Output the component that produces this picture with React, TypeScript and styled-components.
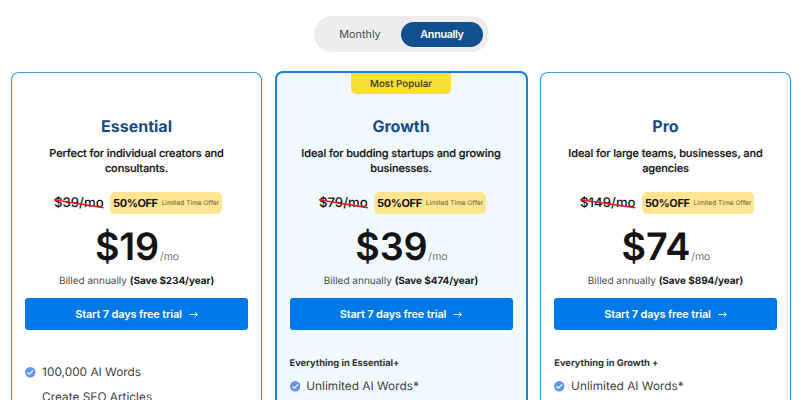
import React from "react";
import styled, { createGlobalStyle } from "styled-components";

const GlobalStyle = createGlobalStyle`
  *, *::before, *::after { box-sizing: border-box; }
  html, body { margin: 0; height: 400px; overflow: hidden; background: #fff; }
  body {
    font-family: Inter, "Liberation Sans", sans-serif;
    color: #141414;
    text-rendering: geometricPrecision;
  }
`;

const Page = styled.main`
  height: 400px;
  overflow: hidden;
  padding: 16px 9px 0 11px;
`;

const Toggle = styled.div`
  display: flex;
  align-items: center;
  width: 175px;
  height: 36px;
  margin: 0 0 19px 303px;
  padding: 0 6px 0 5px;
  border-radius: 18px;
  background: #ededed;
`;

const ToggleOption = styled.button<{ $active?: boolean }>`
  flex: 1;
  height: 25px;
  padding: 0;
  border: 0;
  border-radius: 13px;
  background: ${(p) => (p.$active ? "#11508f" : "transparent")};
  color: ${(p) => (p.$active ? "#fff" : "#484848")};
  font: ${(p) => (p.$active ? 600 : 400)} 10.8px/25px Inter, sans-serif;
  letter-spacing: ${(p) => (p.$active ? "-0.34px" : "0")};
`;

const Plans = styled.div`
  display: grid;
  grid-template-columns: 251px 253px 251px;
  column-gap: 12.5px;
`;

const Card = styled.section<{ $featured?: boolean }>`
  display: flex;
  flex-direction: column;
  height: 340px;
  margin-top: ${(p) => (p.$featured ? "0" : "1px")};
  padding: ${(p) => (p.$featured ? "0 13px" : "1px 13.3px 0")};
  border: ${(p) => (p.$featured ? "2px solid #1a7fe0" : "1px solid #3c97e6")};
  border-bottom: 0;
  border-radius: 8px 8px 0 0;
  background: ${(p) => (p.$featured ? "#f0f9fe" : "#fff")};
`;

const BadgeSlot = styled.div<{ $short?: boolean }>`
  display: flex;
  justify-content: center;
  height: ${(p) => (p.$short ? "42px" : "43px")};
`;

const Badge = styled.span`
  width: 100px;
  height: 21px;
  border-radius: 0 0 5px 5px;
  background: #f9de38;
  color: #3a3210;
  font-size: 9.8px;
  font-weight: 500;
  line-height: 23px;
  text-align: center;
`;

const PlanName = styled.h2`
  margin: 0;
  color: #144b87;
  font-size: 16px;
  font-weight: 700;
  line-height: 20px;
  text-align: center;
`;

const Description = styled.p`
  height: 30px;
  margin: 10px 0 0;
  font-size: 11px;
  font-weight: 500;
  line-height: 15px;
  letter-spacing: -0.12px;
  text-align: center;
  white-space: pre-line;
  -webkit-text-stroke: 0.2px currentColor;
`;

const OfferRow = styled.div`
  display: flex;
  justify-content: center;
  align-items: center;
  gap: 6.5px;
  height: 22px;
  margin-top: 16px;
  padding-left: 3.2px;
`;

const OldPrice = styled.span`
  position: relative;
  font-size: 13.2px;
  font-weight: 500;
  line-height: 20px;
`;

const Strike = styled.svg`
  position: absolute;
  left: 0;
  top: 5px;
  width: 100%;
  height: 12px;
`;

const Offer = styled.span`
  display: flex;
  justify-content: center;
  align-items: center;
  gap: 4px;
  width: 112px;
  height: 22px;
  border-radius: 5px;
  background: #ffe590;
  white-space: nowrap;
`;

const Discount = styled.b`
  font-size: 11px;
  font-weight: 700;
  letter-spacing: -0.4px;
`;

const OfferNote = styled.span`
  color: #665a38;
  font-size: 6.6px;
`;

const PriceRow = styled.div`
  display: flex;
  justify-content: center;
  align-items: baseline;
  gap: 1px;
  height: 46px;
  margin-top: 10px;
  padding-left: 1px;
  line-height: 46px;
`;

const Price = styled.strong`
  font-size: 37.7px;
  font-weight: 600;
  letter-spacing: -0.2px;
`;

const Period = styled.span`
  color: #747474;
  font-size: 10.5px;
`;

const Billing = styled.p`
  margin: 4px 0 0;
  color: #4c4c4c;
  font-size: 10px;
  line-height: 14px;
  text-align: center;
  white-space: nowrap;

  b { color: #202020; font-weight: 700; letter-spacing: -0.08px; }
`;

const TrialButton = styled.button`
  display: flex;
  justify-content: center;
  align-items: center;
  gap: 7px;
  flex: none;
  height: 32px;
  margin-top: 10px;
  padding: 0;
  border: 0;
  border-radius: 3px;
  background: #0079e8;
  color: #fff;
  font: 600 11px/32px Inter, sans-serif;
  letter-spacing: -0.18px;
`;

const Included = styled.h3`
  margin: 28px 0 0;
  color: #303438;
  font-size: 9.3px;
  font-weight: 700;
  line-height: 12px;
  white-space: nowrap;
`;

const Features = styled.ul<{ $offset: number }>`
  margin: ${(p) => p.$offset}px 0 0;
  padding: 0;
  list-style: none;
`;

const Feature = styled.li`
  display: grid;
  grid-template-columns: 10.5px 1fr;
  align-items: center;
  column-gap: 6.3px;
  height: 24.5px;
  color: #3e4144;
  font-size: 11.85px;
  line-height: 24.5px;

  svg { display: block; }
  span { grid-column: 2; }
`;

const Check = () => (
  <svg width="10.5" height="10.5" viewBox="0 0 10 10">
    <circle cx="5" cy="5" r="5" fill="#6495ed" />
    <path d="M2.3 5.1 4.2 6.8 7.7 3.3" fill="none" stroke="#fff" strokeWidth="1.1" />
  </svg>
);

const Arrow = () => (
  <svg width="9" height="8" viewBox="0 0 9 8" fill="none" stroke="#fff" strokeWidth="0.9">
    <path d="M0.3 4.5H8.3M5.7 1.8 8.4 4.5 5.7 7.2" />
  </svg>
);

type Plan = {
  name: string;
  description: string;
  old: string;
  price: string;
  save: string;
  included?: string;
  features: { text: string; checked: boolean }[];
  featured?: boolean;
};

const plans: Plan[] = [
  {
    name: "Essential",
    description: "Perfect for individual creators and\nconsultants.",
    old: "$39/mo",
    price: "$19",
    save: "(Save $234/year)",
    features: [
      { text: "100,000 AI Words", checked: true },
      { text: "Create SEO Articles", checked: false },
    ],
  },
  {
    name: "Growth",
    description: "Ideal for budding startups and growing\nbusinesses.",
    old: "$79/mo",
    price: "$39",
    save: "(Save $474/year)",
    included: "Everything in Essential+",
    features: [{ text: "Unlimited AI Words*", checked: true }],
    featured: true,
  },
  {
    name: "Pro",
    description: "Ideal for large teams, businesses, and\nagencies",
    old: "$149/mo",
    price: "$74",
    save: "(Save $894/year)",
    included: "Everything in Growth +",
    features: [{ text: "Unlimited AI Words*", checked: true }],
  },
];

const PlanCard = ({ plan }: { plan: Plan }) => (
  <Card $featured={plan.featured}>
    <BadgeSlot $short={!plan.featured}>{plan.featured && <Badge>Most Popular</Badge>}</BadgeSlot>
    <PlanName>{plan.name}</PlanName>
    <Description>{plan.description}</Description>
    <OfferRow>
      <OldPrice>
        {plan.old}
        <Strike viewBox="0 0 50 12" preserveAspectRatio="none">
          <path d="M0 1.8 50 9.8" stroke="#df1720" strokeWidth="1.5" />
        </Strike>
      </OldPrice>
      <Offer>
        <Discount>50%OFF</Discount>
        <OfferNote>Limited Time Offer</OfferNote>
      </Offer>
    </OfferRow>
    <PriceRow>
      <Price>{plan.price}</Price>
      <Period>/mo</Period>
    </PriceRow>
    <Billing>
      Billed annually <b>{plan.save}</b>
    </Billing>
    <TrialButton>
      Start 7 days free trial <Arrow />
    </TrialButton>
    {plan.included && <Included>{plan.included}</Included>}
    <Features $offset={plan.included ? 4 : 30}>
      {plan.features.map((f) => (
        <Feature key={f.text}>
          {f.checked && <Check />}
          <span>{f.text}</span>
        </Feature>
      ))}
    </Features>
  </Card>
);

export default function App() {
  return (
    <>
      <GlobalStyle />
      <Page>
        <Toggle>
          <ToggleOption>Monthly</ToggleOption>
          <ToggleOption $active>Annually</ToggleOption>
        </Toggle>
        <Plans>
          {plans.map((plan) => (
            <PlanCard key={plan.name} plan={plan} />
          ))}
        </Plans>
      </Page>
    </>
  );
}
